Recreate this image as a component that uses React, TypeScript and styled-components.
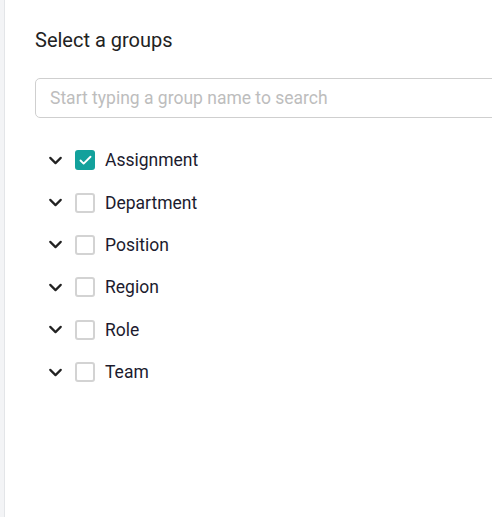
import React, { useState } from "react";
import styled, { createGlobalStyle } from "styled-components";
import { ChevronDown, Check } from "lucide-react";

const Global = createGlobalStyle`
  html, body { margin: 0; padding: 0; background: #fff; overflow: hidden; }
  body { font-family: Roboto, "Noto Sans", Arial, sans-serif; }
`;

const Page = styled.div`
  display: flex;
  width: 492px;
  height: 517px;
  overflow: hidden;
`;

const SideStrip = styled.div`
  width: 4px;
  flex: 0 0 4px;
  background: #f3f4f6;
  border-right: 1px solid #e3e5e8;
`;

const Panel = styled.div`
  flex: 1;
  padding: 28px 0 0 30px;
  display: flex;
  flex-direction: column;
  min-width: 0;
`;

const Title = styled.h2`
  margin: 0;
  font-size: 20px;
  line-height: 24px;
  font-weight: 400;
  color: #222;
`;

const SearchInput = styled.input`
  margin-top: 26px;
  width: 500px;
  height: 40px;
  box-sizing: border-box;
  border: 1px solid #cfcfcf;
  border-radius: 5px;
  padding: 0 14px;
  font-family: Roboto, Arial, sans-serif;
  font-size: 17.5px;
  color: #222;
  outline: none;
  &::placeholder { color: #bdbdbd; }
`;

const List = styled.ul`
  list-style: none;
  margin: 21px 0 0 0;
  padding: 0;
`;

const Row = styled.li`
  display: flex;
  align-items: center;
  height: 42.4px;
`;

const Toggle = styled.span`
  display: flex;
  align-items: center;
  justify-content: center;
  width: 24px;
  height: 24px;
  margin-left: 8px;
  color: #222;
`;

const Box = styled.span<{ $checked: boolean }>`
  display: flex;
  align-items: center;
  justify-content: center;
  width: 20px;
  height: 20px;
  box-sizing: border-box;
  margin-left: 8px;
  border-radius: 3px;
  border: ${(p) => (p.$checked ? "none" : "2px solid #d3d3d3")};
  background: ${(p) => (p.$checked ? "#12a19c" : "#fff")};
  color: #fff;
  cursor: pointer;
`;

const Label = styled.span`
  margin-left: 10px;
  font-size: 17.5px;
  color: #1c1b2e;
`;

const groups = ["Assignment", "Department", "Position", "Region", "Role", "Team"];

export default function App() {
  const [checked, setChecked] = useState<Record<string, boolean>>({ Assignment: true });
  return (
    <>
      <Global />
      <Page>
        <SideStrip />
        <Panel>
          <Title>Select a groups</Title>
          <SearchInput placeholder="Start typing a group name to search" />
          <List>
            {groups.map((g) => (
              <Row key={g}>
                <Toggle>
                  <ChevronDown size={21} strokeWidth={2.5} />
                </Toggle>
                <Box
                  $checked={!!checked[g]}
                  onClick={() => setChecked((c) => ({ ...c, [g]: !c[g] }))}
                >
                  {checked[g] && <Check size={15} strokeWidth={3} />}
                </Box>
                <Label>{g}</Label>
              </Row>
            ))}
          </List>
        </Panel>
      </Page>
    </>
  );
}
